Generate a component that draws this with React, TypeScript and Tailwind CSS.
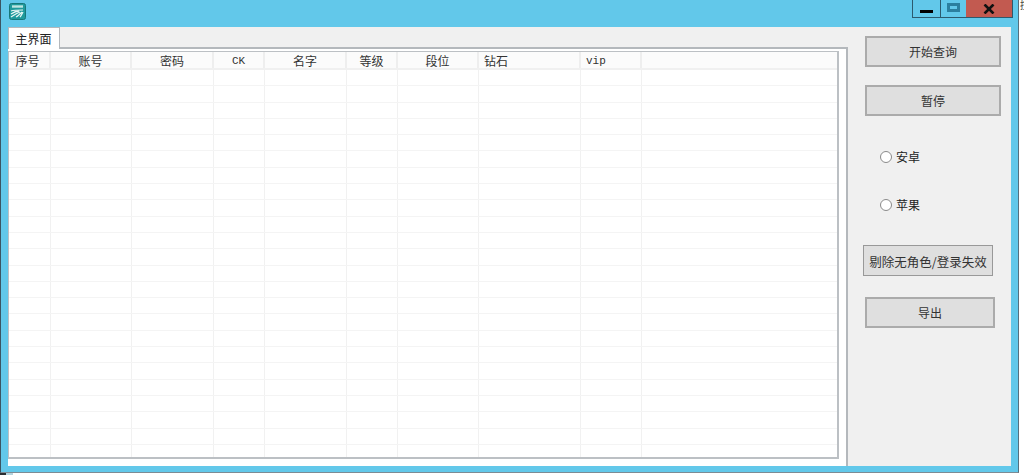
import React from "react";

const columns = [
  { label: "序号", width: 42, align: "text-center", extra: "pr-[3px]" },
  { label: "账号", width: 81, align: "text-center" },
  { label: "密码", width: 82, align: "text-center" },
  { label: "CK", width: 51, align: "text-center", latin: true },
  { label: "名字", width: 82, align: "text-center" },
  { label: "等级", width: 51, align: "text-center" },
  { label: "段位", width: 81, align: "text-center" },
  { label: "钻石", width: 102, align: "text-left", extra: "pl-[5px]" },
  { label: "vip", width: 61, align: "text-left", extra: "pl-[5px]", latin: true },
];

// last row is cut off by the list's bottom edge
const rows = Array.from({ length: 24 });

const AppIcon = () => (
  <svg width="17" height="17" viewBox="0 0 17 17">
    <rect x="0.5" y="0.5" width="16" height="16" rx="2" fill="#1f9a9c" stroke="#16777a" />
    <path d="M3 3.5h11" stroke="#bfe6e2" strokeWidth="2.4" />
    <path d="M2 8c3-1 7-1 12-1" stroke="#e8f6f4" strokeWidth="1.2" fill="none" />
    <path d="M2 11c3-2 6-3 8-3M2 14c3-2 6-4 9-5M7 14c2-1 4-3 6-5M11 14c1-1 2-3 3-5" stroke="#e8f6f4" strokeWidth="1.3" fill="none" />
  </svg>
);

const Radio = ({ label, className }: { label: string; className: string }) => (
  <div className={`flex items-center gap-[4px] text-[12px] text-[#222] ${className}`}>
    <span className="w-[12px] h-[12px] rounded-full border border-[#8a8a8a] bg-white" />
    <span>{label}</span>
  </div>
);

const ActionButton = ({ label, className }: { label: string; className: string }) => (
  <button className={`block border-2 border-[#ababab] bg-[#dfdfdf] text-[#333] ${className}`}>
    {label}
  </button>
);

export default function App() {
  return (
    <div className="w-[1024px] h-[475px] overflow-hidden flex bg-white font-['Noto_Sans_CJK_SC',sans-serif]">
      <div className="w-[1019px] shrink-0 flex flex-col">
        <div className="w-[1019px] h-[473px] shrink-0 flex flex-col bg-[#62c8ea] border-l border-r border-b border-l-[#3b5563] border-r-[#56707e] border-b-[#7d8b94] relative">
          <div className="h-[27px] shrink-0 pl-[8px] pt-[3px] flex items-start">
            <AppIcon />
          </div>

          {/* window buttons */}
          <div className="absolute top-0 right-[5px] w-[101px] h-[18px] flex border border-t-0 border-[#2c5a6e]">
            <div className="w-[28px] flex items-end justify-center pb-[4px] border-r border-[#2c5a6e]">
              <span className="block w-[13px] h-[3px] bg-black" />
            </div>
            <div className="w-[25px] flex items-start justify-center pt-[3px]">
              <span className="block w-[13px] h-[9px] border-[3px] border-[#2b7f9f] bg-[#62c8ea]" />
            </div>
            <div className="flex-1 bg-[#c25a50] flex items-center justify-center">
              <svg width="12" height="10" viewBox="0 0 12 10">
                <path d="M1.5 0.5l9 9M10.5 0.5l-9 9" stroke="#111" strokeWidth="2.6" />
              </svg>
            </div>
          </div>

          <div className="h-[439px] shrink-0 mx-[7px] flex bg-[#f0f0f0]">
            {/* tab area */}
            <div className="w-[840px] shrink-0 flex flex-col">
              <div className="h-[20px] shrink-0 flex items-stretch">
                <div className="w-[52px] h-[22px] z-10 bg-white border border-b-0 border-[#b4b8bc] text-[12px] text-[#222] text-center leading-[21px] pr-[1px]">
                  主界面
                </div>
              </div>
              <div className="h-[419px] shrink-0 bg-white border-t-2 border-r-2 border-[#b4b8bc] pt-[2px] pr-[7px] pb-[7px]">
                <div className="h-[408px] border-l border-r-2 border-b-2 border-t border-[#bcc0c4] overflow-hidden">
                  <div className="flex h-[18px] border-b-2 border-[#f0f0f0] bg-[#fbfbfb]">
                    {columns.map((c) => (
                      <div
                        key={c.label}
                        style={{ width: c.width }}
                        className={`shrink-0 border-r-2 border-[#eeeeee] text-[#333] leading-[18px] ${c.align} ${c.extra ?? ""} ${
                          c.latin ? "font-['Liberation_Mono',monospace] text-[11px]" : "text-[12px]"
                        }`}
                      >
                        {c.label}
                      </div>
                    ))}
                  </div>
                  {rows.map((_, i) => (
                    <div key={i} className="flex h-[16.3px] border-b border-[#f4f4f4]">
                      {columns.map((c) => (
                        <div key={c.label} style={{ width: c.width }} className="shrink-0 border-r border-[#f1f1f1]" />
                      ))}
                    </div>
                  ))}
                </div>
              </div>
            </div>

            {/* side controls */}
            <div className="flex-1 pt-[9px] pl-[15px]">
              <ActionButton label="开始查询" className="w-[136px] h-[31px] ml-[2px] text-[12px] pt-[1px]" />
              <ActionButton label="暂停" className="w-[136px] h-[31px] ml-[2px] mt-[18px] text-[12px]" />
              <Radio label="安卓" className="ml-[17px] mt-[32px]" />
              <Radio label="苹果" className="ml-[17px] mt-[30px]" />
              <ActionButton label="剔除无角色/登录失效" className="w-[130px] h-[31px] mt-[31px] !border !border-[#999] text-[12.5px] whitespace-nowrap pt-[4px]" />
              <ActionButton label="导出" className="w-[130px] h-[31px] ml-[2px] mt-[21px] text-[12px]" />
            </div>
          </div>
        </div>
        <div className="h-[2px] flex">
          <div className="w-[6px] bg-[#2a2f33]" />
          <div className="w-[7px] bg-[#b5d3dc]" />
        </div>
      </div>
      <div className="w-[5px] h-[12px] overflow-hidden text-[10px] leading-[10px] text-[#444] pl-[1px]">控</div>
    </div>
  );
}
